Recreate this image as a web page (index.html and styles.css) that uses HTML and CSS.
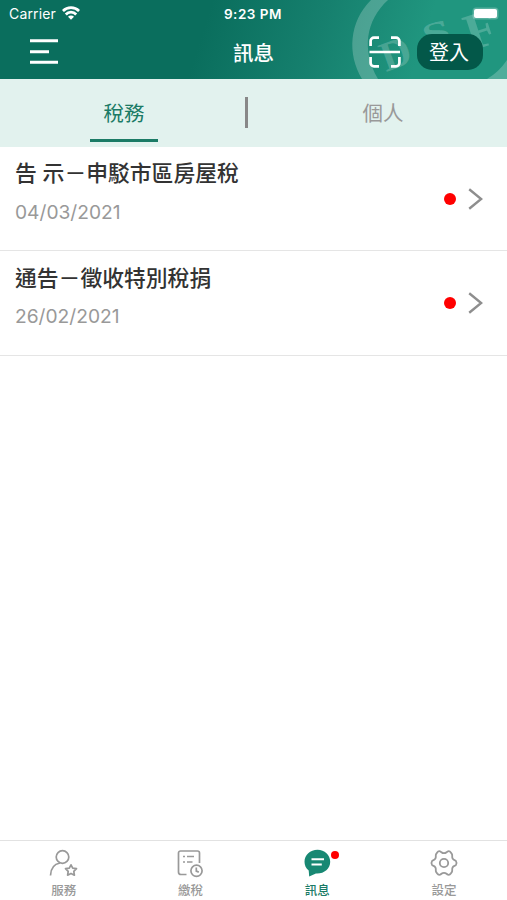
FILE: index.html
```html
<!DOCTYPE html>
<html lang="zh-Hant">
<head>
<meta charset="utf-8">
<title>訊息</title>
<link rel="stylesheet" href="styles.css">
</head>
<body>
<div class="app">
  <header class="header">
    <svg class="seal" width="165" height="79" viewBox="342 0 165 79" aria-hidden="true">
      <path d="M371 0C349 22 347 54 362 79H378C361 50 366 20 388 0ZM487 79Q499 72 507 60V79Z" fill="#fff" fill-opacity=".22"/>
      <g class="seal-letters">
        <text transform="translate(386 72) rotate(-20)" font-size="42">D</text>
        <text transform="translate(425 47) rotate(-14) scale(1.4 .9)" font-size="36">S</text>
        <text transform="translate(471 51) rotate(-18)" font-size="52">F</text>
      </g>
    </svg>
    <div class="status">
      <div class="carrier"><span>Carrier</span>
        <svg width="18" height="14" viewBox="0 0 18 14" fill="none" stroke="#fff" stroke-width="2.8"><path d="M.9 5a11.4 11.4 0 0 1 16.200 0M3.800 8.400a7.300 7.300 0 0 1 10.400 0"/><path d="M9 13.800 6 10.800a4.200 4.200 0 0 1 6 0z" fill="#fff" stroke="none"/></svg>
      </div>
      <time>9:23 PM</time>
      <div class="battery"></div>
    </div>
    <div class="navbar">
      <svg class="menu" width="28" height="26" viewBox="0 0 28 26" stroke="#fff" stroke-width="3"><path d="M0 1.700h28M0 12.700h19M0 23.300h28"/></svg>
      <h1>訊息</h1>
      <div class="actions">
        <svg width="32" height="32" viewBox="0 0 32 32" fill="none" stroke="#fff" stroke-width="2.700"><path d="M1.600 10V5a3.400 3.400 0 0 1 3.400-3.400h5M22 1.600h5A3.400 3.400 0 0 1 30.400 5v5M30.400 21v6a3.400 3.400 0 0 1-3.400 3.400h-5M10 30.400H5A3.400 3.400 0 0 1 1.600 27v-6M.5 16h30.500"/></svg>
        <button class="login">登入</button>
      </div>
    </div>
  </header>
  <nav class="tabs">
    <a class="tab active">稅務</a>
    <span class="divider"></span>
    <a class="tab">個人</a>
  </nav>
  <main>
    <article class="item">
      <div class="copy"><h2>告 示－申駁市區房屋稅</h2><p>04/03/2021</p></div>
      <i class="dot"></i>
      <svg class="chevron" width="15" height="22" viewBox="0 0 15 22" fill="none" stroke="#8e8e8e" stroke-width="2.400"><path d="m1.200 1.300 12 9.700-12 9.700"/></svg>
    </article>
    <article class="item">
      <div class="copy"><h2>通告－徵收特別稅捐</h2><p>26/02/2021</p></div>
      <i class="dot"></i>
      <svg class="chevron" width="15" height="22" viewBox="0 0 15 22" fill="none" stroke="#8e8e8e" stroke-width="2.400"><path d="m1.200 1.300 12 9.700-12 9.700"/></svg>
    </article>
  </main>
  <footer class="tabbar">
    <a class="nav">
      <svg width="30" height="30" viewBox="0 0 30 30" fill="none" stroke="#999" stroke-width="1.700"><circle cx="14.500" cy="9" r="6.300"/><path d="M2.500 27.500C2.700 20 6.500 16 12 15M23 16.800l1.700 3.400 3.800.5-2.700 2.700.6 3.800-3.400-1.800-3.400 1.800.6-3.800-2.700-2.700 3.800-.5z" stroke-linejoin="round"/></svg>
      <span>服務</span>
    </a>
    <a class="nav">
      <svg width="30" height="30" viewBox="0 0 30 30" fill="none" stroke="#999" stroke-width="1.700"><path d="M11.500 26.500H6A2.500 2.500 0 0 1 3.500 24V5A2 2 0 0 1 5.500 3h17a2 2 0 0 1 2 2v10M8 8.500h2m2 0h7M8 14h2m2 0h5.500"/><circle cx="21.500" cy="22.800" r="5.600"/><path d="M21.300 19.500v3.600l2.500 1"/></svg>
      <span>繳稅</span>
    </a>
    <a class="nav active">
      <svg width="30" height="30" viewBox="0 0 30 30"><path d="M15.500 1.800C8.200 1.800 2.500 7 2.500 13.700c0 3.500 1.500 6.600 4.200 8.800L7.200 28.500l6.700-3c7.900.6 14.300-4.700 14.300-11.800 0-6.700-5.600-11.900-12.700-11.900z" fill="#188873"/><path d="M9.500 11.200h12.500M9.500 16.400h10.300" stroke="#fff" stroke-width="2"/></svg>
      <i class="badge"></i>
      <span>訊息</span>
    </a>
    <a class="nav">
      <svg width="30" height="30" viewBox="0 0 30 30" fill="none" stroke="#999" stroke-width="1.800" stroke-linejoin="round"><path d="M8.200 4.400Q9.200 2.900 11 3.300C12.600 3.900 12.800 5.200 15 5.200S17.400 3.900 19 3.300Q20.800 2.900 21.800 4.400L23 6.300C23.600 8 22.700 8.900 23.600 10.500S25.500 11.800 26.900 12.900Q28.300 15 26.900 17.100C25.500 18.200 24.500 17.900 23.600 19.500S23.600 22 23 23.700L21.800 25.600Q20.800 27.100 19 26.700C17.400 26.100 17.200 24.800 15 24.800S12.600 26.100 11 26.700Q9.200 27.100 8.200 25.600L7 23.700C6.400 22 7.300 21.100 6.400 19.500S4.500 18.200 3.100 17.100Q1.700 15 3.100 12.900C4.500 11.800 5.500 12.100 6.400 10.500S6.400 8 7 6.300Z"/><circle cx="15" cy="15" r="4.200"/></svg>
      <span>設定</span>
    </a>
  </footer>
</div>
</body>
</html>
```

FILE: styles.css
```css
* { box-sizing: border-box; }
body { margin: 0; background: #fff; font-family: Inter, "Noto Sans CJK TC", sans-serif; }
h1, h2, p { margin: 0; }
svg { display: block; }
.app { height: 900px; display: flex; flex-direction: column; }
.header { position: relative; height: 79px; flex: none; overflow: hidden; color: #fff; background: linear-gradient(108deg, #0a6e5d 0%, #0a6e5d 40%, #16806e 62%, #20967f 82%, #20967f 100%); }
.seal { position: absolute; right: 0; top: 0; }
.seal-letters { font-family: "Liberation Serif", serif; font-weight: 700; fill: #fff; fill-opacity: .2; }
.status { position: relative; height: 27px; display: grid; grid-template-columns: 1fr auto 1fr; align-items: center; padding: 0 10px 0 9px; font-size: 13px; }
.carrier { display: flex; align-items: center; gap: 6px; font-size: 14px; letter-spacing: .15px; }
.carrier svg { margin-top: -2px; }
.status time { font-size: 13.500px; font-weight: 600; letter-spacing: .5px; }
.battery { justify-self: end; width: 23px; height: 9px; border-radius: 2px; background: #fff; box-shadow: 0 0 0 1.500px #ffffff40; }
.navbar { position: relative; height: 52px; display: grid; grid-template-columns: 1fr auto 1fr; align-items: center; padding: 0 24px 2px 30px; }
.navbar h1 { margin: 3px 4px 0 0; font-size: 20.500px; line-height: 28px; font-weight: 500; transform: translateX(-1px); }
.actions { display: flex; gap: 16px; justify-content: flex-end; align-items: center; }
.login { width: 66px; height: 36px; padding: 2px 2px 0 0; border: 0; border-radius: 15px; background: #035849; color: #fff; font: 400 20px/34px Inter, "Noto Sans CJK TC", sans-serif; }
.tabs { height: 68px; flex: none; display: grid; grid-template-columns: 68px 1fr 68px; background: #e2f2ee; padding: 0 90px; }
.tab { width: 68px; height: 63px; padding-top: 21px; text-align: center; font-size: 20.500px; line-height: 28px; color: #999; }
.tab.active { color: #1b7b66; border-bottom: 3px solid #1b7b66; }
.divider { width: 3px; height: 31px; margin: 18px 0 0 87px; background: #888; }
.item { display: flex; align-items: center; padding: 0 24px 0 15px; border-bottom: 1px solid #e5e5e5; }
.item:first-child { height: 104px; }
.item:last-child { height: 105px; }
.copy { flex: 1; height: 100%; padding-top: 11px; }
.item:last-child .copy { padding-top: 12px; }
.copy h2 { font-size: 21.800px; line-height: 30px; font-weight: 500; color: #333; }
.copy p { margin-top: 11px; font-size: 19.200px; line-height: 26px; color: #999; }
.item:last-child p { margin-top: 10px; }
.dot { width: 12px; height: 12px; border-radius: 50%; background: #f00; margin-right: 12px; }
.tabbar { height: 60px; margin-top: auto; border-top: 1px solid #e2e2e2; display: grid; grid-template-columns: repeat(4, 1fr); }
.nav { position: relative; display: flex; flex-direction: column; align-items: center; padding-top: 7px; color: #999; font-size: 12.500px; line-height: 18px; font-weight: 500; }
.nav span { margin: 4px 0 0 1px; }
.nav.active { color: #1b7b66; }
.badge { position: absolute; left: 77px; top: 10px; width: 8px; height: 8px; border-radius: 50%; background: #f00; }
```
